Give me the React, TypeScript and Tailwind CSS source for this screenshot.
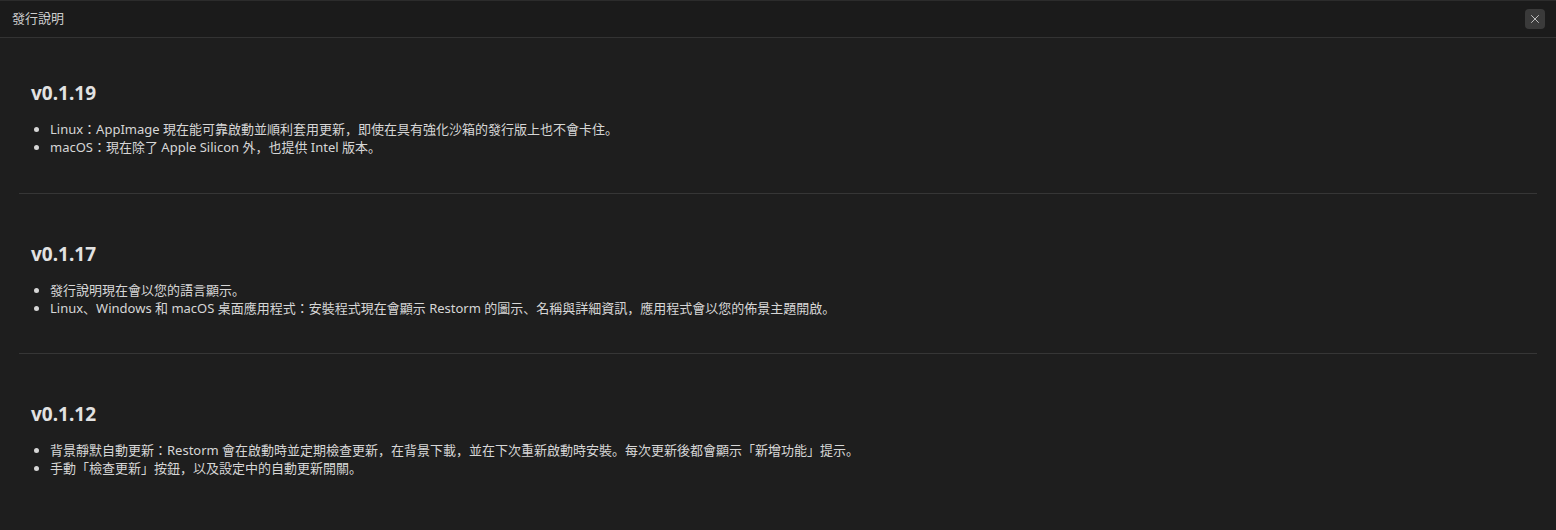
import { X } from 'lucide-react';

interface Release {
  version: string;
  notes: string[];
}

const releases: Release[] = [
  {
    version: 'v0.1.19',
    notes: [
      'Linux：AppImage 現在能可靠啟動並順利套用更新，即使在具有強化沙箱的發行版上也不會卡住。',
      'macOS：現在除了 Apple Silicon 外，也提供 Intel 版本。',
    ],
  },
  {
    version: 'v0.1.17',
    notes: [
      '發行說明現在會以您的語言顯示。',
      'Linux、Windows 和 macOS 桌面應用程式：安裝程式現在會顯示 Restorm 的圖示、名稱與詳細資訊，應用程式會以您的佈景主題開啟。',
    ],
  },
  {
    version: 'v0.1.12',
    notes: [
      '背景靜默自動更新：Restorm 會在啟動時並定期檢查更新，在背景下載，並在下次重新啟動時安裝。每次更新後都會顯示「新增功能」提示。',
      '手動「檢查更新」按鈕，以及設定中的自動更新開關。',
    ],
  },
];

export default function App() {
  return (
    <div
      className="h-[530px] w-full overflow-hidden bg-[#1e1e1e] border-t border-[#2c2c2c] text-[#d6d6d6]"
      style={{ fontFamily: '"Noto Sans", "Noto Sans CJK JP", sans-serif' }}
    >
      <header className="flex h-[37px] items-center justify-between border-b border-[#333333] bg-[#1b1b1b] pl-3 pr-[11px]">
        <h1 className="text-[13px] text-[#cccccc]">發行說明</h1>
        <button className="flex h-5 w-5 items-center justify-center rounded-sm bg-[#3a3a3a] text-[#d0d0d0]">
          <X size={14} strokeWidth={1.5} />
        </button>
      </header>

      <div className="px-[19px]">
        {releases.map((release, i) => (
          <section
            key={release.version}
            className={`px-3 ${i === 0 ? 'pt-[41px] pb-[37px]' : 'pt-[46px] pb-[36px] border-t border-[#363636]'}`}
          >
            <h2 className="text-[19px] font-bold leading-7 text-[#e2e2e2]">{release.version}</h2>
            <ul className="mt-[13px] list-disc pl-[19px] text-[13px] leading-[18px]">
              {release.notes.map((note) => (
                <li key={note}>{note}</li>
              ))}
            </ul>
          </section>
        ))}
      </div>
    </div>
  );
}
